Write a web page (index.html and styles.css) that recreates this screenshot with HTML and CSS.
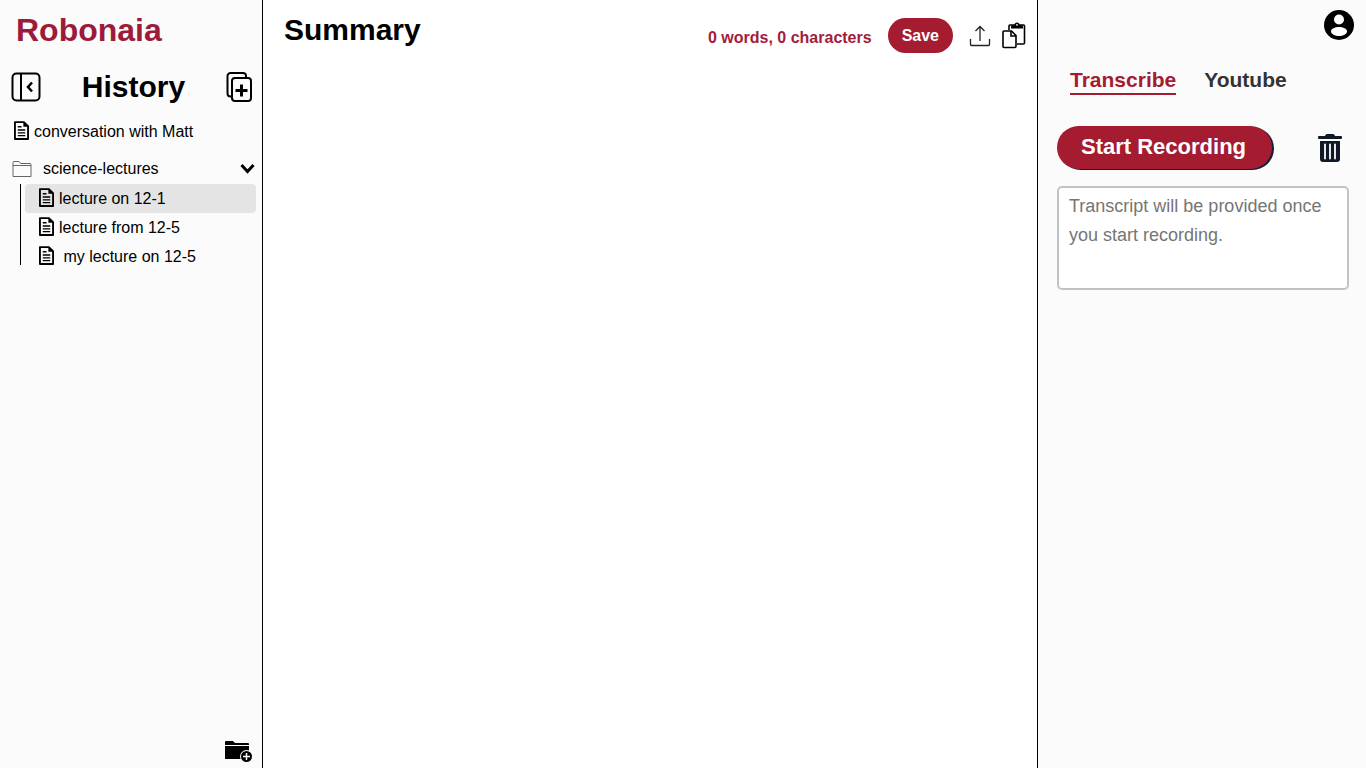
FILE: index.html
```
<!doctype html>
<html lang="en">
  <head>
    <meta charset="UTF-8" />
    <meta name="viewport" content="width=device-width, initial-scale=1.0" />
    <title>Robonaia</title>
    <link rel="stylesheet" href="styles.css">
  </head>
  <body>
    <svg class="defs" aria-hidden="true">
      <symbol id="doc" viewBox="0 0 16 20">
        <path d="M1 1h9.500L15 5.500V19H1z" fill="none" stroke="#000" stroke-width="2" stroke-linejoin="round" />
        <path d="M10 1v5h5z" />
        <path d="M4 6h4M4 9.500h8M4 12.500h8M4 15.500h8" stroke="#000" stroke-width="1.500" />
      </symbol>
    </svg>

    <aside class="sidebar">
      <a class="logo" href="#">Robonaia</a>

      <div class="history-header">
        <button class="icon-btn" aria-label="Collapse sidebar">
          <svg width="30" height="30" viewBox="0 0 30 30" fill="none" stroke="#000" stroke-width="2">
            <rect x="1.500" y="1.500" width="27" height="27" rx="4" />
            <path d="M10 1.500v27" />
            <path d="M21 10.500L17 15l4 4.500" stroke-width="2.500" />
          </svg>
        </button>
        <h2>History</h2>
        <button class="icon-btn" aria-label="New summary">
          <svg width="26" height="30" viewBox="0 0 26 30" fill="none" stroke="#000" stroke-width="2">
            <path d="M5 24.500H4.500a3 3 0 0 1-3-3V4a3 3 0 0 1 3-3H17a3 3 0 0 1 3 3v1" />
            <rect x="6" y="6" width="19" height="23" rx="3" />
            <path d="M15.500 12.500v12M9.500 18.500h12" stroke-width="3" />
          </svg>
        </button>
      </div>

      <nav class="files">
        <a class="file" href="#">
          <svg width="15" height="19"><use href="#doc" /></svg>
          conversation with Matt
        </a>
        <button class="folder" aria-expanded="true">
          <svg width="20" height="16" viewBox="0 0 20 16" fill="none" stroke="#666">
            <path d="M1 15.500V1.500q0-1 1-1h5l1.500 2H18q1 0 1 1v12zM1 4.500h18" />
          </svg>
          <span>science-lectures</span>
          <svg width="15" height="11" viewBox="0 0 15 11" fill="none" stroke="#000" stroke-width="3">
            <path d="M1.500 2l6 6.500 6-6.500" />
          </svg>
        </button>
        <div class="folder-files">
          <a class="file active" href="#">
            <svg width="15" height="19"><use href="#doc" /></svg>
            lecture on 12-1
          </a>
          <a class="file" href="#">
            <svg width="15" height="19"><use href="#doc" /></svg>
            lecture from 12-5
          </a>
          <a class="file" href="#">
            <svg width="15" height="19"><use href="#doc" /></svg>
            &nbsp;my lecture on 12-5
          </a>
        </div>
      </nav>

      <button class="icon-btn new-folder" aria-label="New folder">
        <svg width="29" height="24" viewBox="0 0 29 24">
          <path d="M1 3q0-1 1-1h7l2 2h13q1 0 1 1v1H1zM1 7h24v13H1z" />
          <circle cx="22.500" cy="17.500" r="6.500" fill="#fbfbfb" />
          <circle cx="22.500" cy="17.500" r="5.500" />
          <path d="M22.500 14v7M19 17.500h7" stroke="#fff" stroke-width="1.500" />
        </svg>
      </button>
    </aside>

    <main class="summary">
      <h1>Summary</h1>
      <div class="toolbar">
        <span class="count">0 words, 0 characters</span>
        <button class="save-btn">Save</button>
        <button class="icon-btn" aria-label="Export">
          <svg width="22" height="22" viewBox="0 0 22 22" fill="none" stroke="#222" stroke-width="1.300">
            <path d="M1.500 14v5.500q0 1 1 1h17q1 0 1-1V14" />
            <path d="M11 16V1.500M6.500 6L11 1.500 15.500 6" />
          </svg>
        </button>
        <button class="icon-btn" aria-label="Copy">
          <svg width="24" height="27" viewBox="0 0 24 27" fill="none" stroke="#000" stroke-width="1.600">
            <path d="M7 8V4q0-1 1-1h13.500q1 0 1 1v17q0 1-1 1H15" />
            <path d="M9 6.500V4.500Q9 3 11 3h1.500a2.500 2.500 0 0 1 5 0H19q2 0 2 1.500v2z" fill="#000" stroke="none" />
            <circle cx="15" cy="2.800" r="0.900" fill="#fff" stroke="none" />
            <path d="M2 9h7.500L14 13.500V24q0 1.500-1 1.500H2q-1 0-1-1V10q0-1 1-1z" fill="#fff" />
            <path d="M9 9v5h5" />
          </svg>
        </button>
      </div>
    </main>

    <aside class="recorder">
      <button class="icon-btn account" aria-label="Account">
        <svg width="30" height="30" viewBox="0 0 30 30">
          <circle cx="15" cy="15" r="15" />
          <circle cx="15" cy="9.500" r="5" fill="#fff" />
          <path d="M7 21.500c0-3 4-4.500 8-4.500s8 1.500 8 4.500c0 2.500-4 4.500-8 4.500s-8-2-8-4.500z" fill="#fff" />
        </svg>
      </button>

      <nav class="tabs">
        <a class="tab active" href="#">Transcribe</a>
        <a class="tab" href="#">Youtube</a>
      </nav>

      <div class="record-row">
        <button class="record-btn">Start Recording</button>
        <button class="icon-btn" aria-label="Delete transcript">
          <svg width="26" height="30" viewBox="0 0 26 30" fill="#101a26">
            <path d="M2 3h6q.5-2 2-2h6q1.500 0 2 2h6Q25 3 25 4v1q0 1-1 1H2Q1 6 1 5V4q0-1 1-1z" />
            <path d="M3 8h20v18q0 3-3 3H6q-3 0-3-3z" />
            <path d="M8 11.500v14M13 11.500v14M18 11.500v14" stroke="#fff" stroke-width="1.800" stroke-linecap="round" />
          </svg>
        </button>
      </div>

      <textarea
        class="transcript"
        aria-label="Transcript"
        placeholder="Transcript will be provided once you start recording."
      ></textarea>
    </aside>
  </body>
</html>
```
FILE: styles.css
```
* {
  box-sizing: border-box;
}
body {
  margin: 0;
  min-height: 100vh;
  display: grid;
  grid-template-columns: 263px 1fr 329px;
  font-family: "Liberation Sans", Arial, sans-serif;
  font-size: 16px;
  color: #000;
  background-color: #fff;
}
h1,
h2 {
  margin: 0;
  font-size: 30px;
  line-height: 34px;
}
a {
  color: inherit;
  text-decoration: none;
}
button {
  font-family: inherit;
  color: inherit;
  cursor: pointer;
}
svg {
  display: block;
  flex: none;
}
.defs {
  position: absolute;
  width: 0;
  height: 0;
}
.icon-btn {
  padding: 0;
  border: none;
  background: none;
}

/* left panel */
.sidebar {
  display: flex;
  flex-direction: column;
  padding: 12px 6px 5px 10px;
  border-right: 1px solid #000;
  background-color: #fbfbfb;
}
.logo {
  padding-left: 6px;
  font-size: 32px;
  font-weight: bold;
  line-height: 36px;
  color: #9c1a3a;
}
.history-header {
  display: flex;
  align-items: center;
  justify-content: space-between;
  margin-top: 22px;
  padding: 0 4px 0 1px;
}
.files {
  display: flex;
  flex-direction: column;
  margin-top: 13px;
}
.file {
  display: flex;
  align-items: center;
  gap: 5px;
  height: 29px;
  padding-left: 4px;
}
.file svg {
  margin-bottom: 2px;
}
.folder {
  display: flex;
  align-items: center;
  height: 29px;
  margin-top: 8px;
  padding: 0 1px 0 2px;
  border: none;
  background: none;
  font-size: 16px;
}
.folder span {
  flex: 1;
  padding-left: 11px;
  text-align: left;
}
/* tree line stops a little above the bottom of the last file */
.folder-files {
  margin-top: 1px;
  margin-left: 10px;
  padding-left: 5px;
  background: linear-gradient(#000, #000) no-repeat;
  background-size: 1px calc(100% - 6px);
}
.folder-files .file {
  padding-left: 14px;
}
.folder-files .active {
  border-radius: 4px;
  background-color: #e4e4e4;
}
.new-folder {
  align-self: flex-end;
  margin-top: auto;
  margin-right: 3px;
}

/* middle panel */
.summary {
  display: flex;
  align-items: flex-start;
  justify-content: space-between;
  padding: 13px 11px 0 21px;
}
.toolbar {
  display: flex;
  align-items: center;
  gap: 16px;
  padding-top: 5px;
}
.count {
  padding-top: 4px;
  font-weight: bold;
  color: #a31c3b;
}
.save-btn {
  height: 35px;
  padding: 0 14px;
  border: none;
  border-radius: 18px;
  background-color: #a51c30;
  color: #fff;
  font-size: 16px;
  font-weight: bold;
}
.toolbar .icon-btn + .icon-btn {
  margin-left: -5px;
}

/* right panel */
.recorder {
  display: flex;
  flex-direction: column;
  padding: 10px 17px 0 19px;
  border-left: 1px solid #000;
  background-color: #fbfbfb;
}
.account {
  align-self: flex-end;
  margin-right: -5px;
}
.tabs {
  display: flex;
  gap: 28px;
  margin-top: 27px;
  padding-left: 13px;
  font-size: 21px;
  font-weight: bold;
  line-height: 26px;
  color: #333;
}
.tab.active {
  border-bottom: 2px solid #a51c30;
  color: #a51c30;
}
.record-row {
  display: flex;
  align-items: center;
  justify-content: space-between;
  margin-top: 31px;
  padding-right: 6px;
}
.record-btn {
  height: 43px;
  padding: 0 26px 2px 24px;
  border: none;
  border-radius: 22px;
  background-color: #a51c30;
  box-shadow: 2px 1px 0 #1c1c3a;
  color: #fff;
  font-size: 22px;
  font-weight: bold;
}
.transcript {
  height: 104px;
  margin-top: 17px;
  padding: 4px 10px;
  border: 2px solid #c3c3c3;
  border-radius: 5px;
  background-color: #fff;
  font-family: inherit;
  font-size: 18px;
  line-height: 29px;
  resize: none;
}
.transcript::placeholder {
  color: #757575;
}
```
